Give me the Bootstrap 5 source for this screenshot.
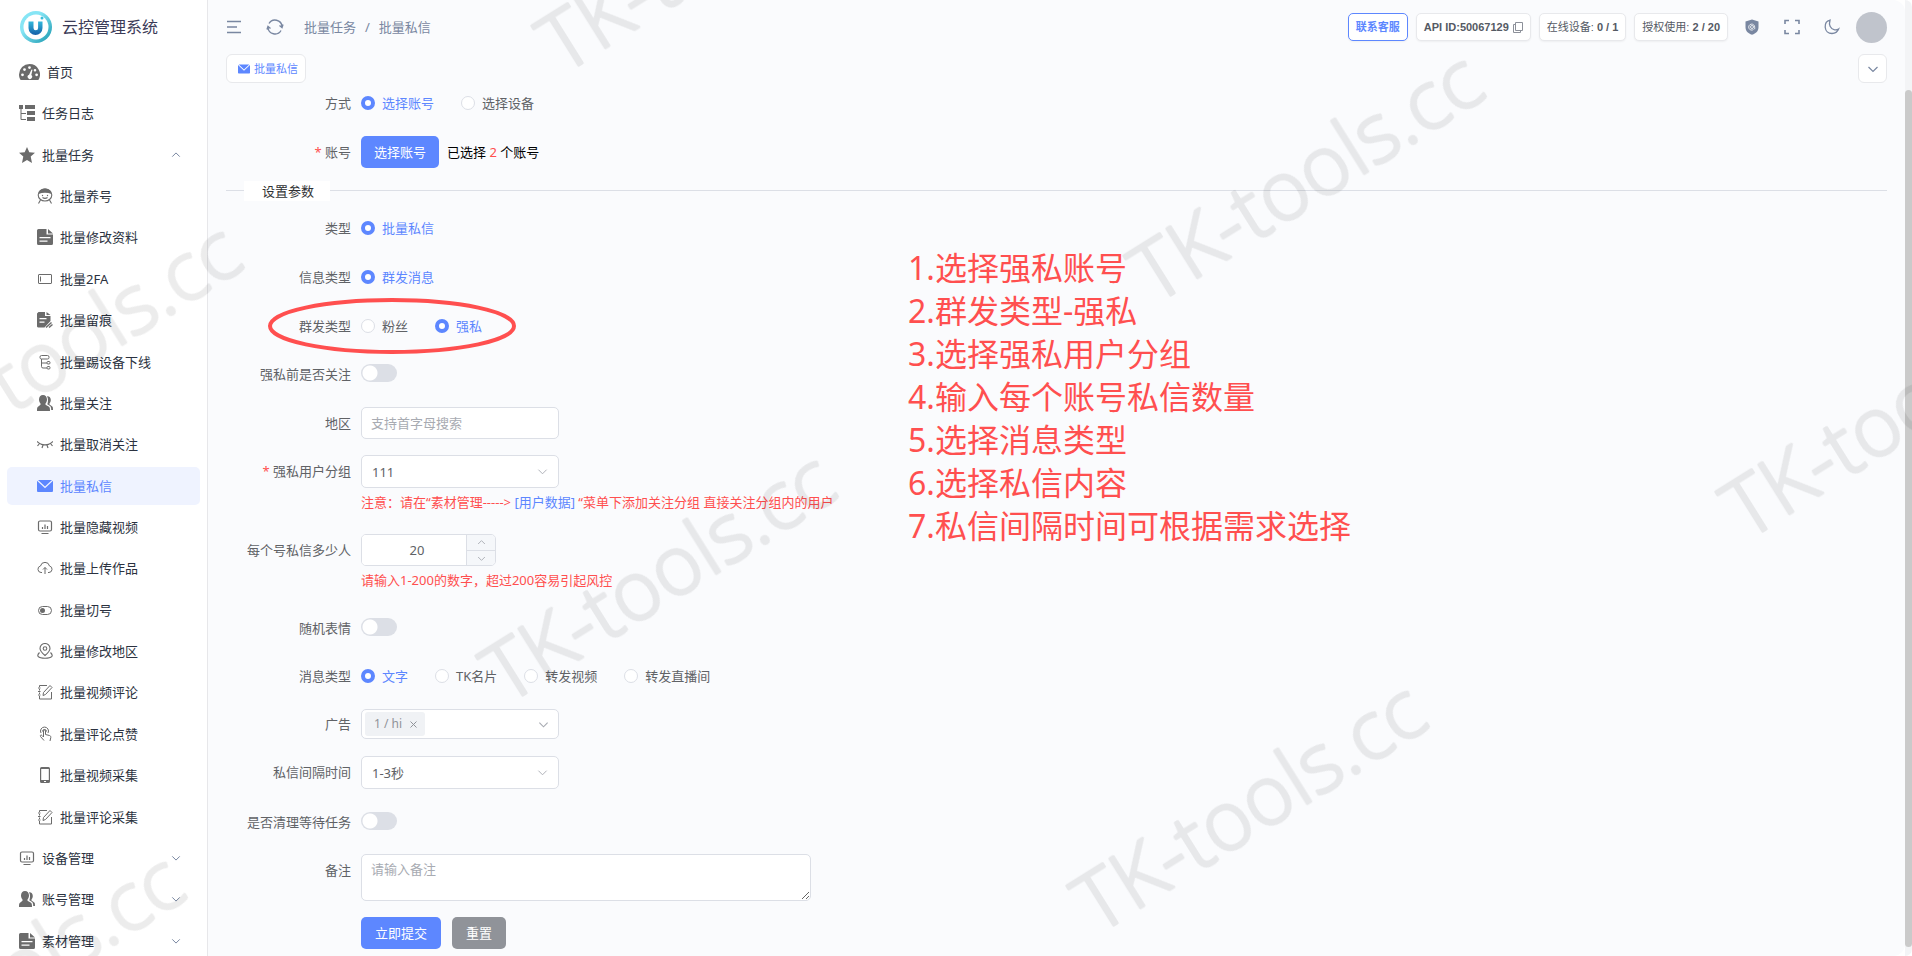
<!DOCTYPE html>
<html lang="zh-CN">
<head>
<meta charset="utf-8">
<meta name="viewport" content="width=device-width, initial-scale=1">
<title>云控管理系统</title>
<link href="https://cdn.jsdelivr.net/npm/bootstrap@5.3.0/dist/css/bootstrap.min.css" rel="stylesheet">
<style>
:root{--brand:#5d87ff;--line:#dcdfe6;--muted:#7987a1;--danger:#ff4f4f}
body{font-family:"Noto Sans","Noto Sans CJK SC",sans-serif;font-size:13px;line-height:20px;color:#606266;background:#fff}
svg{display:block;flex:none}
.side{width:208px;border-right:1px solid #e7e7ea;background:#fff}
.brand{height:51px;padding:3px 0 0 20px;gap:10px;font-size:16px;color:#3b3b57}
.menu{height:calc(100vh - 46px);min-height:836px;display:grid;grid-auto-rows:1fr;padding:0 7px 0 7px;margin:0}
.menu a{height:38px;border-radius:5px;padding-left:12px;color:#2b3240;gap:7px;margin-top:2px}
.menu a>svg{color:#6b6b6b}
.menu .sub a{padding-left:30px}
.menu .arrow{margin-left:auto;margin-right:19px;color:var(--muted)}
.menu a.active,.menu a.active>svg{color:var(--brand)}
.menu a.active{background:#eff3ff}
.page{background:#fafbfd;border-radius:0 12px 12px 0;min-width:0}
.topbar{height:54px;padding:0 18px;color:var(--muted)}
.icon-btn{border:0;background:none;padding:0;color:inherit}
.crumbs{gap:9px}
.crumbs a{color:inherit}
.pill{height:28px;border:1px solid #e8e9ec;border-radius:5px;background:#fff;padding:0 7px;font:bold 11px/26px "Liberation Sans","Noto Sans CJK SC",sans-serif;color:#555a64;box-shadow:0 1px 2px #0000000d;white-space:nowrap}
.pill span{font-weight:400}
.pill-brand{border-color:var(--brand);color:var(--brand);padding:0 7px}
.avatar{width:31px;height:31px;background:#c0c4cc}
.tabs{padding:0 18px}
.page-tab{height:29px;border:1px solid #e8e9ec;border-radius:6px;background:#fff;color:var(--brand);font-size:11px;padding:0 7px 0 11px;gap:4px}
.tab-more{width:29px;height:29px;border:1px solid #e8e9ec;border-radius:6px;background:#fff;color:var(--muted);padding:0}
.body-area{padding:4px 18px 0}
.f-row{display:flex;gap:10px;margin-bottom:17px}
.f-row.tight{margin-bottom:16px}
.f-row.hinted{margin-bottom:22px}
.f-label{width:125px;flex:none;text-align:right;line-height:32px;white-space:nowrap}
.req::before{content:"* ";color:var(--danger)}
.num{color:var(--danger)}
.f-body{min-height:32px}
.radios{display:flex;align-items:center;gap:27px}
.opt{display:flex;align-items:center;gap:7px}
.opt input{appearance:none;width:14px;height:14px;margin:0;border:1px solid var(--line);border-radius:50%;background:#fff}
.opt input:checked{border:4px solid var(--brand)}
.opt input:checked+span{color:var(--brand)}
.toggle{appearance:none;display:block;width:36px;height:18px;border-radius:9px;margin:6px 0 8px;background:#dcdfe6 radial-gradient(circle at 9px 9px,#fff 7px,transparent 8px)}
.form-control,.form-select,.tag-box{width:198px;height:32px;font-size:13px;line-height:20px;border:1px solid var(--line);border-radius:5px;padding:0 9px;color:#606266;background-color:#fff}
.form-control::placeholder{color:#a8abb2}
.form-select{height:33px;padding-left:10px;background-image:url("data:image/svg+xml,%3Csvg xmlns='http://www.w3.org/2000/svg' viewBox='0 0 12 12'%3E%3Cpath d='M1.500 4l4.500 4.500L10.500 4' fill='none' stroke='%23a8abb2'/%3E%3C/svg%3E");background-size:11px 11px;background-position:right 10px center}
.tag-box{height:30px;padding:0 9px 0 3px;margin-top:1px;margin-bottom:1px}
.tag-box input{min-width:0;width:40px;border:0;outline:0;background:none}
.pick{height:24px;border-radius:3px;background:#f0f2f5;color:#909399;font-size:12px;padding:0 8px 0 9px;gap:8px;white-space:nowrap;flex:none}
.stepper{width:135px;height:32px;border:1px solid var(--line);border-radius:5px;overflow:hidden;background:#fff}
.stepper input{width:104px;border:0;text-align:center;padding:0 0 0 6px;color:#606266}
.stepper .steps{width:29px;border-left:1px solid var(--line);background:#f5f7fa;color:#a8abb2}
.steps button{height:15px;display:flex;align-items:center;justify-content:center}
.steps button+button{border-top:1px solid var(--line)}
textarea.form-control{width:450px;height:47px;min-height:47px;padding:4px 9px}
.hint{color:var(--danger);margin-top:4px;font-size:13px}
.hint a{color:var(--brand);text-decoration:none}
.btn{font-size:13px;line-height:20px;border:0;border-radius:5px;height:32px;padding:0 13px;color:#fff}
.actions{gap:11px}
.actions .btn{padding:0 14px}
.btn-brand{background:var(--brand)}
.btn-grey{background:#909399}
.split{height:20px;margin:13px 0 11px;padding-left:18px;background:linear-gradient(var(--line),var(--line)) 0 9px/100% 1px no-repeat}
.split h2{font-size:13px;font-weight:400;line-height:20px;color:#303133;background:#fff;padding:0 16px 0 18px;margin:0}
.rail{width:7px;background:#f3f4f6;border-radius:0 12px 12px 0;padding:90px 0 9px}
.rail div{height:100%;border-radius:4px;background:#cacaca}
.ring{position:absolute;left:-94px;top:-13px;pointer-events:none}
.notes{position:absolute;left:908px;top:246px;margin:0;padding:0;list-style:none;font-size:32px;line-height:43px;color:var(--danger)}
.marks{position:fixed;inset:0;width:100%;height:100%;pointer-events:none}
.marks text{font-family:"Open Sans","Noto Sans",sans-serif;font-weight:300;font-size:82px;stroke:#000;stroke-width:3px;stroke-linejoin:round}
</style>
</head>
<body class="overflow-hidden">
<svg width="0" height="0" class="position-absolute" aria-hidden="true">
<symbol id="i-gauge" viewBox="0 0 21 16"><path fill="currentColor" fill-rule="evenodd" d="M10.500 0A10.500 10.500 0 0 0 0 10.500C0 12.600.6 14.500 1.600 16h17.800A10.500 10.500 0 0 0 10.500 0zM3.500 12.200a1.400 1.400 0 1 1 0-2.800 1.400 1.400 0 0 1 0 2.800zM5.500 7a1.400 1.400 0 1 1 0-2.800A1.400 1.400 0 0 1 5.500 7zm5-2a1.400 1.400 0 1 1 0-2.800 1.400 1.400 0 0 1 0 2.800zM12.500 5.500l1 .2-1.200 5.400a2.200 2.200 0 1 1-2.200-.4zM16 7.500a1.300 1.300 0 1 1 0-2.600 1.300 1.300 0 0 1 0 2.600zm1.600 4.700a1.400 1.400 0 1 1 0-2.800 1.400 1.400 0 0 1 0 2.800z"/></symbol>
<symbol id="i-tree" viewBox="0 0 16 16"><path fill="currentColor" d="M0 0h4v4H0zM6 0h10v4H6zM8 6h8v4H8zM8 12h8v4H8z"/><path d="M2 3v11.500h5M2 8.500h5" fill="none" stroke="currentColor"/></symbol>
<symbol id="i-star" viewBox="0 0 16 16"><path fill="currentColor" d="M8 0l2.300 5.200 5.700.6-4.300 3.800 1.300 6.400L8 13l-5 3 1.300-6.400L0 5.800l5.700-.6z"/></symbol>
<symbol id="i-face" viewBox="0 0 16 16"><g fill="none" stroke="currentColor" stroke-width="1.100"><ellipse cx="8" cy="7" rx="6.800" ry="6"/><path d="M3.500 12L1.500 15.500M12.500 12l2 3.500M5.500 9.500q2.500 1.800 5 0"/></g><path fill="currentColor" d="M1.500 6C2.500 1.500 5.500.5 8 .500s5.500 1 6.500 5.500C10.500 4.300 5.500 4.300 1.500 6z"/><circle cx="5.500" cy="7.500" r=".7" fill="currentColor"/><circle cx="10.500" cy="7.500" r=".7" fill="currentColor"/></symbol>
<symbol id="i-doc" viewBox="0 0 16 16"><path fill="currentColor" fill-rule="evenodd" d="M1.500 0h8v5.500H16v9a1.500 1.500 0 0 1-1.500 1.500h-13A1.500 1.500 0 0 1 0 14.500v-13A1.500 1.500 0 0 1 1.500 0zM11 0l5 4.500h-5zM2.500 8v1.200h11V8zm0 3.500v1.200h8v-1.200z"/></symbol>
<symbol id="i-card" viewBox="0 0 16 16"><g fill="none" stroke="currentColor"><rect x="1.500" y="3.500" width="13" height="9" rx=".5"/><path d="M3.500 5.500v5"/></g></symbol>
<symbol id="i-docedit" viewBox="0 0 16 16"><path fill="currentColor" fill-rule="evenodd" d="M1.500 0H8v4h5.500v5l-6 6.500h-6A1.500 1.500 0 0 1 0 14.500v-13zM9.500 0l4 3h-4zM2.500 6v1.200h7V6zm0 3.500v1.200h5V9.500z"/><path d="M9 15.500l5.500-5M12 15.500l3.500-3" stroke="currentColor" stroke-width="1.400"/></symbol>
<symbol id="i-flow" viewBox="0 0 16 16"><g fill="none" stroke="currentColor"><rect x="3" y="1.500" width="9" height="3.500" rx="1.500"/><path d="M4.500 5v7.500a1.500 1.500 0 0 0 1.500 1.500h4M4.500 9H10"/><rect x="10" y="7.500" width="3" height="2.500" rx="1"/><rect x="10" y="12.500" width="3" height="2.500" rx="1"/></g></symbol>
<symbol id="i-users" viewBox="0 0 16 16"><path fill="currentColor" d="M6 0c2.500 0 4 1.800 4 4.500 0 1.700-.7 3.200-1.500 4v1.300l3.500 2c.7.5 1 1.200 1 4.200H0c0-3 .2-3.700 1-4.200l2.500-2V8.500C2.700 7.700 2 6.200 2 4.500 2 1.800 3.500 0 6 0zM10.500 1.300c2 0 3.300 1.500 3.300 3.700 0 1.500-.6 2.800-1.300 3.500v1l2.500 1.700c.8.5 1 1.200 1 3.800h-1.800c0-2.500-.5-3.500-1.500-4.200l-2.400-1.500C11.200 7.500 11.500 3.500 10 1.300z"/></symbol>
<symbol id="i-lash" viewBox="0 0 16 16"><path d="M0 5.500c4.500 4.500 11.500 4.500 16 0M2.500 7.500l-2 2.500M6 9l-1 3M10 9l1 3M13.500 7.500l2 2.500" fill="none" stroke="currentColor" stroke-width="1.200"/></symbol>
<symbol id="i-mail" viewBox="0 0 16 16"><path fill="currentColor" d="M1 2h14l-7 6.500zM0 2.800l8 7.500 8-7.500V13a1 1 0 0 1-1 1H1a1 1 0 0 1-1-1z"/></symbol>
<symbol id="i-chart" viewBox="0 0 16 16"><path d="M3.500 12H3a1.500 1.500 0 0 1-1.500-1.500v-7A1.500 1.500 0 0 1 3 2h10a1.500 1.500 0 0 1 1.500 1.500v7A1.500 1.500 0 0 1 13 12H3M5.500 10V8M8 10V5.500M10.500 10V7M4.500 14.500h7" fill="none" stroke="currentColor" stroke-width="1.200"/></symbol>
<symbol id="i-cloud" viewBox="0 0 16 16"><path d="M5 12.500H4a3.300 3.300 0 0 1-.5-6.500 4.600 4.600 0 0 1 9 0 3.300 3.300 0 0 1-.5 6.500h-1M8 14V7.500M6 9.500l2-2 2 2" fill="none" stroke="currentColor"/></symbol>
<symbol id="i-toggle" viewBox="0 0 16 16"><rect x="1.500" y="4.500" width="13" height="8" rx="4" fill="none" stroke="currentColor"/><circle cx="5.500" cy="8.500" r="2.500" fill="currentColor"/></symbol>
<symbol id="i-pin" viewBox="0 0 16 16"><g fill="none" stroke="currentColor" stroke-width="1.100"><path d="M8 12.500C4.500 9.500 3 7.500 3 5.500a5 5 0 0 1 10 0c0 2-1.500 4-5 7z"/><circle cx="8" cy="5.500" r="1.800"/><path d="M2.500 9.500C-1 13 1 15.300 8 15.300s9-2.300 5.500-5.800"/></g></symbol>
<symbol id="i-edit" viewBox="0 0 16 16"><g fill="none" stroke="currentColor"><path d="M10 1.500H2.500V3M2.500 5v1.500M2.500 8.500V10M2.500 12v3h12V8M1 4h2.500M1 7.500h2.500M1 11h2.500"/><path d="M6 11.500l.5-3 6.500-7 2 2-6.500 7z"/></g></symbol>
<symbol id="i-touch" viewBox="0 0 16 16"><path d="M7 14.500L3.500 10.500c-.7-1 .5-2 1.500-1L6.500 11V5c0-1.500 2-1.500 2 0v3.500l4 1c1 .3 1.500 1 1.300 2L13 15M4 7a4 4 0 1 1 7 0M5.500 5.500a2 2 0 0 1 4 0" fill="none" stroke="currentColor"/></symbol>
<symbol id="i-phone" viewBox="0 0 16 16"><path fill="currentColor" fill-rule="evenodd" d="M4.500 0h7A1.500 1.500 0 0 1 13 1.500v13a1.500 1.500 0 0 1-1.500 1.500h-7A1.500 1.500 0 0 1 3 14.500v-13A1.500 1.500 0 0 1 4.500 0zM4.200 2v11h7.600V2zM7 14v1h2v-1z"/></symbol>
<symbol id="i-down" viewBox="0 0 12 12"><path d="M1.500 4L6 8.500 10.500 4" fill="none" stroke="currentColor" stroke-width="1.200"/></symbol>
<symbol id="i-up" viewBox="0 0 12 12"><path d="M1.500 8L6 3.500 10.500 8" fill="none" stroke="currentColor" stroke-width="1.200"/></symbol>
</svg>

<div class="d-flex vh-100">
<aside class="side flex-shrink-0 overflow-hidden">
  <div class="brand d-flex align-items-center">
    <svg width="32" height="32" viewBox="0 0 32 32"><defs><linearGradient id="g1" x2="1" y2="1"><stop offset=".35" stop-color="#86e5f5"/><stop offset="1" stop-color="#1797ae"/></linearGradient><linearGradient id="g2" x2="0" y2="1"><stop stop-color="#33b8dc"/><stop offset="1" stop-color="#145fa8"/></linearGradient></defs><circle cx="16" cy="16" r="16" fill="url(#g1)"/><circle cx="16" cy="16" r="12.500" fill="#fff"/><path d="M8.500 10.500h5V17a2.300 2.300 0 0 0 4.600 0v-6.500h4.400V17a7 7 0 0 1-14 0z" fill="url(#g2)"/><circle cx="22" cy="7" r="1.500" fill="#39bddb"/></svg>
    <span>云控管理系统</span>
  </div>
  <nav>
  <ul class="menu list-unstyled">
    <li><a href="#" class="d-flex align-items-center text-decoration-none"><svg width="21" height="16"><use href="#i-gauge"/></svg>首页</a></li>
    <li><a href="#" class="d-flex align-items-center text-decoration-none"><svg width="16" height="16"><use href="#i-tree"/></svg>任务日志</a></li>
    <li><a href="#" class="d-flex align-items-center text-decoration-none"><svg width="16" height="16"><use href="#i-star"/></svg>批量任务<svg class="arrow" width="10" height="10"><use href="#i-up"/></svg></a></li>
    <li class="sub"><a href="#" class="d-flex align-items-center text-decoration-none"><svg width="16" height="16"><use href="#i-face"/></svg>批量养号</a></li>
    <li class="sub"><a href="#" class="d-flex align-items-center text-decoration-none"><svg width="16" height="16"><use href="#i-doc"/></svg>批量修改资料</a></li>
    <li class="sub"><a href="#" class="d-flex align-items-center text-decoration-none"><svg width="16" height="16"><use href="#i-card"/></svg>批量2FA</a></li>
    <li class="sub"><a href="#" class="d-flex align-items-center text-decoration-none"><svg width="16" height="16"><use href="#i-docedit"/></svg>批量留痕</a></li>
    <li class="sub"><a href="#" class="d-flex align-items-center text-decoration-none"><svg width="16" height="16"><use href="#i-flow"/></svg>批量踢设备下线</a></li>
    <li class="sub"><a href="#" class="d-flex align-items-center text-decoration-none"><svg width="16" height="16"><use href="#i-users"/></svg>批量关注</a></li>
    <li class="sub"><a href="#" class="d-flex align-items-center text-decoration-none"><svg width="16" height="16"><use href="#i-lash"/></svg>批量取消关注</a></li>
    <li class="sub"><a href="#" class="active d-flex align-items-center text-decoration-none"><svg width="16" height="16"><use href="#i-mail"/></svg>批量私信</a></li>
    <li class="sub"><a href="#" class="d-flex align-items-center text-decoration-none"><svg width="16" height="16"><use href="#i-chart"/></svg>批量隐藏视频</a></li>
    <li class="sub"><a href="#" class="d-flex align-items-center text-decoration-none"><svg width="16" height="16"><use href="#i-cloud"/></svg>批量上传作品</a></li>
    <li class="sub"><a href="#" class="d-flex align-items-center text-decoration-none"><svg width="16" height="16"><use href="#i-toggle"/></svg>批量切号</a></li>
    <li class="sub"><a href="#" class="d-flex align-items-center text-decoration-none"><svg width="16" height="16"><use href="#i-pin"/></svg>批量修改地区</a></li>
    <li class="sub"><a href="#" class="d-flex align-items-center text-decoration-none"><svg width="16" height="16"><use href="#i-edit"/></svg>批量视频评论</a></li>
    <li class="sub"><a href="#" class="d-flex align-items-center text-decoration-none"><svg width="16" height="16"><use href="#i-touch"/></svg>批量评论点赞</a></li>
    <li class="sub"><a href="#" class="d-flex align-items-center text-decoration-none"><svg width="16" height="16"><use href="#i-phone"/></svg>批量视频采集</a></li>
    <li class="sub"><a href="#" class="d-flex align-items-center text-decoration-none"><svg width="16" height="16"><use href="#i-edit"/></svg>批量评论采集</a></li>
    <li><a href="#" class="d-flex align-items-center text-decoration-none"><svg width="16" height="16"><use href="#i-chart"/></svg>设备管理<svg class="arrow" width="10" height="10"><use href="#i-down"/></svg></a></li>
    <li><a href="#" class="d-flex align-items-center text-decoration-none"><svg width="16" height="16"><use href="#i-users"/></svg>账号管理<svg class="arrow" width="10" height="10"><use href="#i-down"/></svg></a></li>
    <li><a href="#" class="d-flex align-items-center text-decoration-none"><svg width="16" height="16"><use href="#i-doc"/></svg>素材管理<svg class="arrow" width="10" height="10"><use href="#i-down"/></svg></a></li>
  </ul>
  </nav>
</aside>

<main class="page flex-grow-1 overflow-hidden">
  <header class="topbar d-flex align-items-center">
    <button class="icon-btn" aria-label="菜单"><svg width="16" height="16" viewBox="0 0 16 16" fill="none" stroke="currentColor" stroke-width="1.400"><path d="M1 2.500h14M1 8h10M1 13.500h14"/></svg></button>
    <button class="icon-btn ms-4" aria-label="刷新"><svg width="18" height="18" viewBox="0 0 18 18" fill="none" stroke="currentColor" stroke-width="1.400"><path d="M3 5.500a7 7 0 0 1 13 3M15 12.500A7 7 0 0 1 2 9.500M1 11.500l1-3 2.500 2M17 6.500l-1 3-2.500-2"/></svg></button>
    <nav class="crumbs d-flex ms-3 ps-1"><a href="#" class="text-decoration-none">批量任务</a><span>/</span><span>批量私信</span></nav>
    <div class="d-flex align-items-center ms-auto">
      <button class="pill pill-brand">联系客服</button>
      <div class="pill d-flex align-items-center ms-2">API ID:50067129<svg class="ms-1" width="10" height="11" viewBox="0 0 10 11" fill="none" stroke="#8c9099"><path d="M2.500.5h7v8h-7zM2 2.500H.500v8h7V9"/></svg></div>
      <div class="pill ms-2"><span>在线设备:</span> 0 / 1</div>
      <div class="pill ms-2"><span>授权使用:</span> 2 / 20</div>
      <button class="icon-btn ms-3" aria-label="安全"><svg width="16" height="16" viewBox="0 0 16 16"><path fill="currentColor" d="M8 .500L14.500 2.500V8c0 4-2.500 6.500-6.500 7.800C4 14.500 1.500 12 1.500 8V2.500z"/><path d="M9.500 10.500a3 3 0 1 1 1.200-2.300v2M9.500 8a1.500 1.500 0 1 1-3 0 1.500 1.500 0 0 1 3 0" fill="none" stroke="#fff" stroke-width=".8"/></svg></button>
      <button class="icon-btn ms-4" aria-label="全屏"><svg width="16" height="16" viewBox="0 0 16 16" fill="none" stroke="currentColor" stroke-width="1.600"><path d="M1 5V1.500h4M11 1.500h4V5M15 11v3.500h-4M5 14.500H1V11"/></svg></button>
      <button class="icon-btn ms-4" aria-label="深色模式"><svg width="16" height="16" viewBox="0 0 16 16" fill="none" stroke="currentColor" stroke-width="1.300"><path d="M6 1.200C2.500 2 1 5 1.200 8.200c.3 3.500 3 6.300 6.800 6.300 3 0 5.500-1.700 6.600-4.500-1.200.8-2.600 1-4 .8C6.500 10 4.500 6 6 1.200z"/></svg></button>
      <div class="avatar rounded-circle ms-3"></div>
    </div>
  </header>
  <div class="tabs d-flex justify-content-between">
    <a href="#" class="page-tab d-flex align-items-center text-decoration-none"><svg width="12" height="12"><use href="#i-mail"/></svg>批量私信</a>
    <button class="tab-more d-flex align-items-center justify-content-center" aria-label="更多"><svg width="12" height="12"><use href="#i-down"/></svg></button>
  </div>

  <form class="body-area" onsubmit="return false">
    <div class="f-row"><div class="f-label">方式</div><div class="f-body radios">
      <label class="opt"><input type="radio" name="mode" checked><span>选择账号</span></label>
      <label class="opt"><input type="radio" name="mode"><span>选择设备</span></label></div></div>
    <div class="f-row mb-0"><div class="f-label req">账号</div><div class="f-body d-flex align-items-center gap-2"><button type="button" class="btn btn-brand">选择账号</button><span class="text-black">已选择 <span class="num">2</span> 个账号</span></div></div>
    <div class="split d-flex"><h2>设置参数</h2></div>
    <div class="f-row"><div class="f-label">类型</div><div class="f-body radios"><label class="opt"><input type="radio" name="kind" checked><span>批量私信</span></label></div></div>
    <div class="f-row"><div class="f-label">信息类型</div><div class="f-body radios"><label class="opt"><input type="radio" name="info" checked><span>群发消息</span></label></div></div>
    <div class="f-row tight"><div class="f-label">群发类型</div><div class="f-body radios position-relative">
      <label class="opt"><input type="radio" name="group"><span>粉丝</span></label>
      <label class="opt"><input type="radio" name="group" checked><span>强私</span></label>
      <svg class="ring" width="250" height="60" viewBox="0 0 250 60"><ellipse cx="125" cy="29" rx="122" ry="26" fill="none" stroke="#ff4f4f" stroke-width="4"/></svg></div></div>
    <div class="f-row"><label class="f-label" for="follow">强私前是否关注</label><div class="f-body"><input class="toggle" type="checkbox" role="switch" id="follow"></div></div>
    <div class="f-row tight"><label class="f-label" for="area">地区</label><div class="f-body"><input class="form-control" id="area" placeholder="支持首字母搜索"></div></div>
    <div class="f-row hinted"><label class="f-label req" for="ugroup">强私用户分组</label><div class="f-body"><select class="form-select" id="ugroup"><option>111</option></select><div class="hint">注意：请在“素材管理-----&gt; <a href="#">[用户数据]</a> “菜单下添加关注分组 直接关注分组内的用户</div></div></div>
    <div class="f-row hinted"><label class="f-label" for="count">每个号私信多少人</label><div class="f-body"><div class="stepper d-flex"><input id="count" value="20"><div class="steps"><button type="button" class="icon-btn w-100" aria-label="增加"><svg width="9" height="9"><use href="#i-up"/></svg></button><button type="button" class="icon-btn w-100" aria-label="减少"><svg width="9" height="9"><use href="#i-down"/></svg></button></div></div><div class="hint">请输入1-200的数字，超过200容易引起风控</div></div></div>
    <div class="f-row tight"><label class="f-label" for="emoji">随机表情</label><div class="f-body"><input class="toggle" type="checkbox" role="switch" id="emoji"></div></div>
    <div class="f-row tight"><div class="f-label">消息类型</div><div class="f-body radios">
      <label class="opt"><input type="radio" name="msg" checked><span>文字</span></label>
      <label class="opt"><input type="radio" name="msg"><span>TK名片</span></label>
      <label class="opt"><input type="radio" name="msg"><span>转发视频</span></label>
      <label class="opt"><input type="radio" name="msg"><span>转发直播间</span></label></div></div>
    <div class="f-row tight"><label class="f-label" for="ad">广告</label><div class="f-body"><div class="tag-box d-flex align-items-center"><span class="pick d-flex align-items-center">1 / hi<svg width="7" height="7" viewBox="0 0 7 7" stroke="currentColor"><path d="M.5.5l6 6M6.500.5l-6 6"/></svg></span><input id="ad" class="flex-grow-1"><svg width="11" height="11" color="#a8abb2"><use href="#i-down"/></svg></div></div></div>
    <div class="f-row"><label class="f-label" for="gap">私信间隔时间</label><div class="f-body"><select class="form-select" id="gap"><option>1-3秒</option></select></div></div>
    <div class="f-row tight"><label class="f-label" for="clear">是否清理等待任务</label><div class="f-body"><input class="toggle" type="checkbox" role="switch" id="clear"></div></div>
    <div class="f-row tight"><label class="f-label" for="memo">备注</label><div class="f-body"><textarea class="form-control" id="memo" placeholder="请输入备注"></textarea></div></div>
    <div class="f-row"><div class="f-label"></div><div class="f-body d-flex actions"><button class="btn btn-brand">立即提交</button><button type="reset" class="btn btn-grey">重置</button></div></div>
  </form>
</main>
<div class="rail flex-shrink-0"><div></div></div>
</div>

<ol class="notes">
  <li>1.选择强私账号</li><li>2.群发类型-强私</li><li>3.选择强私用户分组</li><li>4.输入每个账号私信数量</li><li>5.选择消息类型</li><li>6.选择私信内容</li><li>7.私信间隔时间可根据需求选择</li>
</ol>

<svg class="marks" aria-hidden="true"><g opacity=".075">
  <text transform="translate(562 75) rotate(-32)">TK-tools.cc</text>
  <text transform="translate(1154 305) rotate(-32)">TK-tools.cc</text>
  <text transform="translate(1746 541) rotate(-32)">TK-tools.cc</text>
  <text transform="translate(506 705) rotate(-32)">TK-tools.cc</text>
  <text transform="translate(1097 935) rotate(-32)">TK-tools.cc</text>
  <text transform="translate(-88 476) rotate(-32)">TK-tools.cc</text>
  <text transform="translate(-145 1106) rotate(-32)">TK-tools.cc</text>
</g></svg>
<script src="https://cdn.jsdelivr.net/npm/bootstrap@5.3.0/dist/js/bootstrap.bundle.min.js"></script>
</body>
</html>
